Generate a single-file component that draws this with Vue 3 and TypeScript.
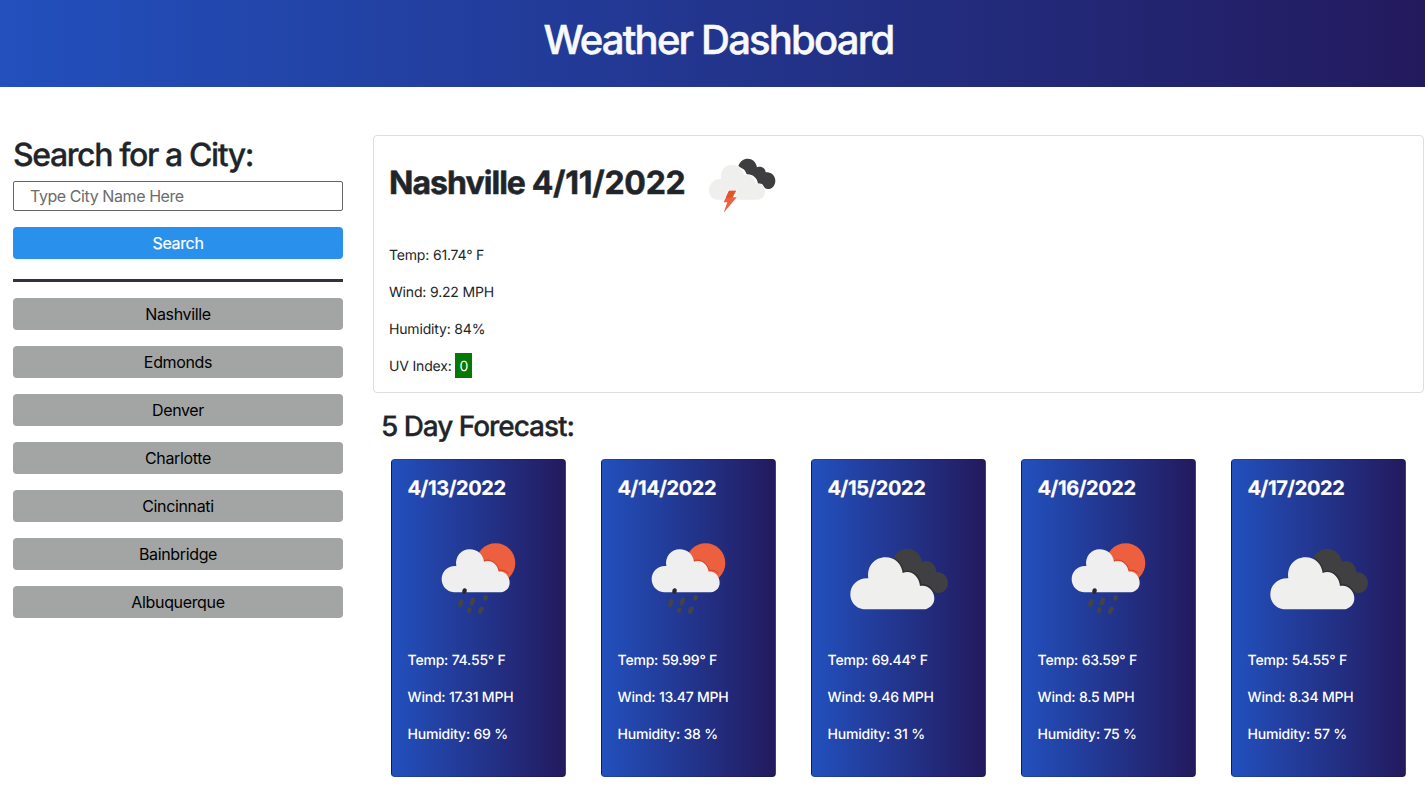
<script setup lang="ts">
import { ref } from 'vue'

interface Forecast {
  date: string
  icon: 'rain' | 'clouds'
  temp: string
  wind: string
  humidity: string
}

const query = ref<string>('')
const cities: string[] = ['Nashville', 'Edmonds', 'Denver', 'Charlotte', 'Cincinnati', 'Bainbridge', 'Albuquerque']
const forecast: Forecast[] = [
  { date: '4/13/2022', icon: 'rain', temp: '74.55', wind: '17.31', humidity: '69' },
  { date: '4/14/2022', icon: 'rain', temp: '59.99', wind: '13.47', humidity: '38' },
  { date: '4/15/2022', icon: 'clouds', temp: '69.44', wind: '9.46', humidity: '31' },
  { date: '4/16/2022', icon: 'rain', temp: '63.59', wind: '8.5', humidity: '75' },
  { date: '4/17/2022', icon: 'clouds', temp: '54.55', wind: '8.34', humidity: '57' },
]
</script>

<template>
  <div class="page">
    <header class="banner"><h1>Weather Dashboard</h1></header>
    <div class="layout">
      <aside class="sidebar">
        <h2>Search for a City:</h2>
        <input v-model="query" type="text" placeholder="Type City Name Here" />
        <button class="search">Search</button>
        <hr />
        <button v-for="city in cities" :key="city" class="city">{{ city }}</button>
      </aside>
      <main class="content">
        <section class="current">
          <div class="title-row">
            <h2>Nashville <span class="today">4/11/2022</span></h2>
            <svg class="storm" viewBox="0 0 255 210">
              <path fill="#3e3e40" d="M115 48C121 33 131 26 143 26C157 26 168 36 171 52C184 47 197 56 197 67C213 64 226 77 226 92C226 106 216 117 204 117C197 117 193 113 190 107C188 102 182 99 174 101C172 84 158 72 141 73C137 70 138 66 134 61C130 56 125 55 115 48Z" />
              <path fill="#efefee" d="M52 149C37 149 27 137 27 121C27 100 43 85 64 87C59 64 74 44 95 44C116 44 130 59 132 76C149 71 163 82 167 101C183 99 195 111 195 125C195 138 184 149 171 149L102 149L110 120L84 120L74 149Z" />
              <path fill="#ec6040" d="M87 122H108L98 142H110L71 188L82 157H71Z" />
              <path fill="#e5532d" d="M87 122H108L98 142L83 145L78 141Z" />
            </svg>
          </div>
          <p>Temp: 61.74° F</p>
          <p>Wind: 9.22 MPH</p>
          <p>Humidity: 84%</p>
          <p>UV Index: <span class="uv">0</span></p>
        </section>
        <h3 class="forecast-title">5 Day Forecast:</h3>
        <section class="forecast">
          <article v-for="day in forecast" :key="day.date" class="day">
            <h4>{{ day.date }}</h4>
            <div class="icon">
              <svg v-if="day.icon === 'rain'" class="rain" viewBox="0 0 300 285">
                <circle cx="197" cy="99" r="59" fill="#ec6040" />
                <path fill="none" stroke="#d83c25" stroke-width="3" d="M158 93C181 84 201 98 207 121C219 119 229 123 236 130" />
                <path fill="#efefef" d="M72 187C49 185 35 167 35 147C35 124 54 106 79 108C74 80 94 58 119 58C143 58 159 74 162 95C183 87 202 101 206 125C224 121 239 139 239 158C239 174 228 184 213 187Z" />
                <g fill="none" stroke="#444446" stroke-width="13" stroke-linecap="round">
                  <path stroke="#29292b" d="M104 181L103 185" />
                  <path d="M94 213L90 224M129 209L125 220M167 202L166 205M118 239L117 242M155 236L150 245" />
                </g>
              </svg>
              <svg v-else class="clouds" viewBox="0 0 360 255">
                <path fill="#404042" d="M160 68C170 50 184 41 202 41C224 41 241 57 246 80C267 72 288 86 289 112C307 109 324 125 324 143C324 160 312 174 295 174C285 174 278 169 273 159C267 151 256 147 242 149C239 124 222 104 189 111C186 91 176 73 160 68Z" />
                <path fill="#303032" d="M160 68C180 76 188 91 191 109C215 102 240 117 244 147C262 145 277 157 284 174L260 180L180 130Z" />
                <path fill="#efefee" d="M70 223C45 219 31 200 31 178C31 150 54 128 85 130C80 94 103 67 137 67C165 67 185 87 188 114C213 104 237 123 240 153C262 147 283 167 283 190C283 207 272 218 257 223Z" />
              </svg>
            </div>
            <p>Temp: {{ day.temp }}° F</p>
            <p>Wind: {{ day.wind }} MPH</p>
            <p>Humidity: {{ day.humidity }} %</p>
          </article>
        </section>
      </main>
    </div>
  </div>
</template>

<style>
body { margin: 0; background: #fff; }
</style>

<style scoped>
* { box-sizing: border-box; }
.page { height: 802px; overflow: hidden; font-family: Inter, sans-serif; color: #212529; font-size: 16px; line-height: 24px; text-rendering: geometricPrecision; }
h1, h2, h3, h4, p { margin: 0; }
.banner { height: 87px; padding: 16px 0 0 12px; text-align: center; color: #f8f9fa; background: linear-gradient(90deg, #2250bd, #231a5e); }
.banner h1 { font-size: 40px; line-height: 48px; font-weight: 500; letter-spacing: -1.8px; -webkit-text-stroke: 0.5px currentColor; }
.layout { display: flex; padding: 48px 1px 0 13px; gap: 30px; }
.sidebar { width: 330px; display: flex; flex-direction: column; }
.sidebar h2 { padding-top: 1px; font-size: 32px; line-height: 38px; height: 46px; font-weight: 500; letter-spacing: -1.4px; white-space: nowrap; -webkit-text-stroke: 0.3px currentColor; }
input { height: 30px; padding: 1px 16px; border: 1px solid #666; border-radius: 2px; font: inherit; letter-spacing: -0.42px; outline: none; }
input::placeholder { color: #6c6c6c; opacity: 1; }
button { height: 32px; padding: 0; border: 0; border-radius: 4px; font: inherit; letter-spacing: -0.35px; }
.search { margin-top: 16px; background: #2990ec; color: #fff; -webkit-text-stroke: 0.2px currentColor; }
hr { width: 100%; height: 3px; margin: 20px 0 16px; border: 0; background: #30343a; }
.city { background: #a3a5a4; color: #000; margin-bottom: 16px; }
.content { flex: 1; min-width: 0; }
.current { height: 258px; border: 1px solid #dcdee1; border-radius: 4px; padding: 14px 15px 0; }
.title-row { display: flex; height: 95px; }
.title-row h2 { width: 296px; margin-top: 13px; font-size: 32px; line-height: 40px; font-weight: 700; letter-spacing: -0.95px; white-space: nowrap; -webkit-text-stroke: 0.5px currentColor; }
.today { letter-spacing: -0.25px; }
.storm { width: 85px; height: 70px; margin-left: 15px; }
p { font-size: 14px; line-height: 21px; margin-bottom: 16px; letter-spacing: -0.17px; white-space: nowrap; }
.uv { display: inline-block; padding: 3px 4px 1px; margin: -3px 0 -1px; color: #fff; background: #047a04; }
.forecast-title { margin: 16px 0 0 8px; font-size: 28px; line-height: 34px; font-weight: 500; letter-spacing: -1.05px; -webkit-text-stroke: 0.3px currentColor; }
.forecast { display: flex; gap: 35px; margin: 16px 0 0 18px; }
.day { width: 175px; height: 318px; padding: 16px; border: 1px solid rgba(0, 0, 0, 0.125); border-radius: 4px; color: #fff; background: linear-gradient(90deg, #2250bd, #231a5e); }
.day h4 { margin-left: -0.5px; font-size: 20px; line-height: 24px; font-weight: 700; letter-spacing: -0.42px; -webkit-text-stroke: 0.2px currentColor; }
.day p { margin-left: -0.4px; font-weight: 500; letter-spacing: -0.22px; }
.icon { height: 150px; padding: 4px 0 0 3px; display: flex; align-items: center; justify-content: center; }
.rain { width: 100px; height: 95px; }
.clouds { width: 120px; height: 85px; }
</style>
